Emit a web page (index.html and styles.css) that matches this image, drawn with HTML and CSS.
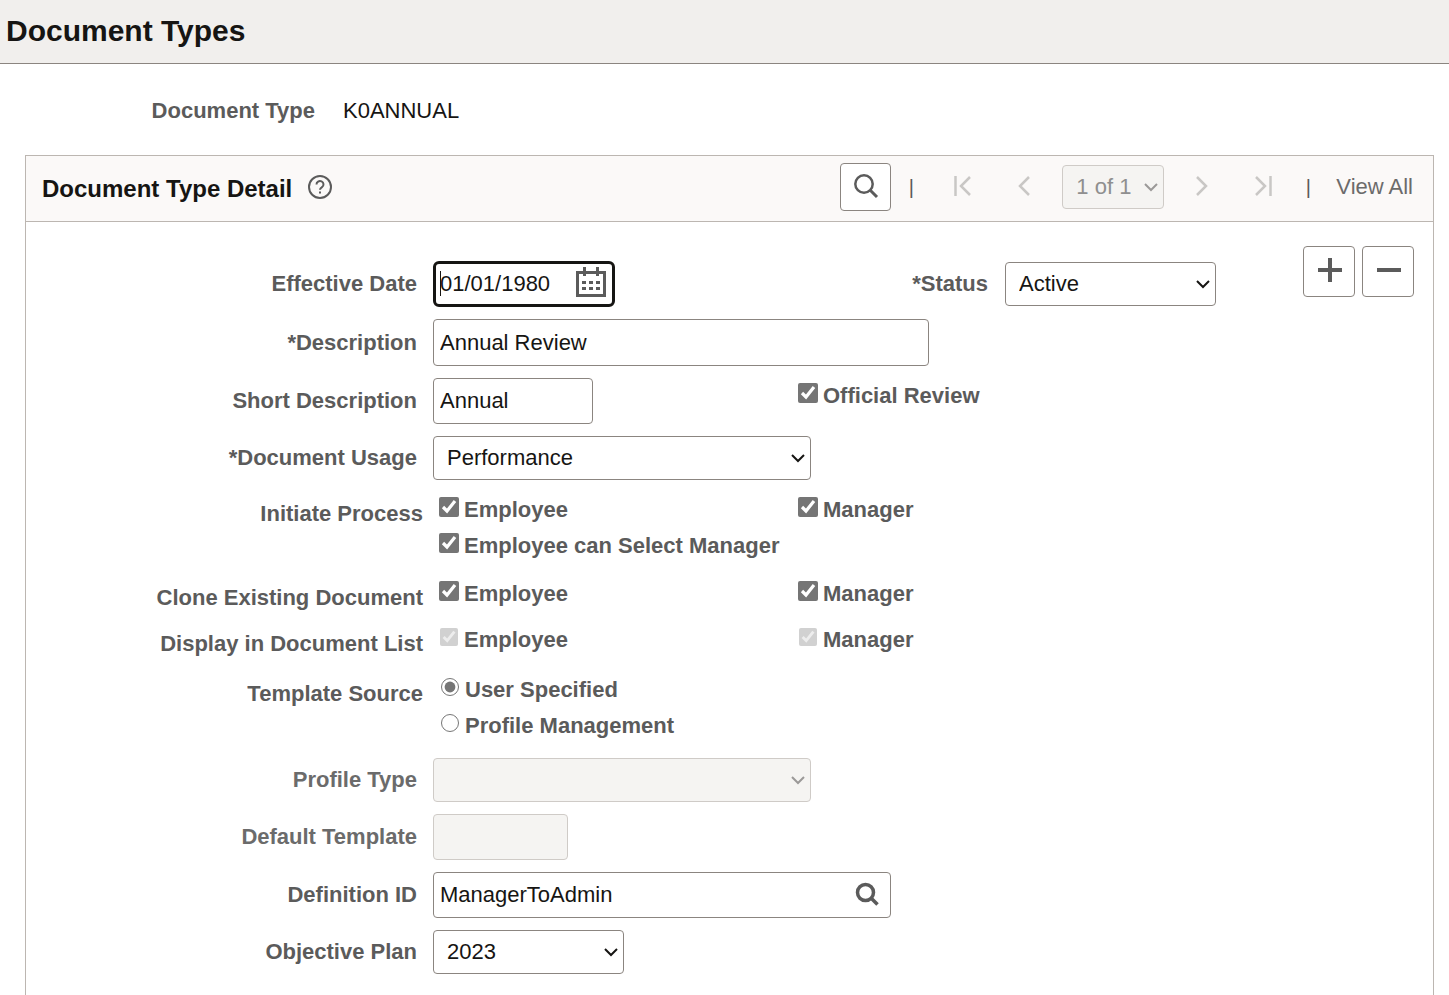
FILE: index.html
```html
<!DOCTYPE html>
<html lang="en">
<head>
    <meta charset="UTF-8">
    <meta name="viewport" content="width=device-width, initial-scale=1.0">
    <title>Document Types</title>
    <link rel="stylesheet" href="styles.css">
</head>
<body>

    <header class="page-header">
        <h1>Document Types</h1>
    </header>

    <div class="doc-key">
        <span class="doc-key-label">Document Type</span>
        <span class="doc-key-value">K0ANNUAL</span>
    </div>

    <section class="panel">
        <div class="panel-header">
            <h2>Document Type Detail</h2>
            <button type="button" class="icon-btn help" aria-label="Help">
                <svg width="26" height="26" viewBox="0 0 26 26"><circle cx="13" cy="13" r="11" stroke-width="2"/><path d="M9.500 10.500a3.500 3.300 0 1 1 5.500 2.600c-1.400.9-2 1.400-2 2.700" stroke-width="2"/><path d="M13 17.500v2" stroke-width="2"/></svg>
            </button>

            <nav class="pager">
                <button type="button" class="find-btn" aria-label="Find">
                    <svg width="26" height="26" viewBox="0 0 26 26"><circle cx="11" cy="11" r="8.700" stroke-width="2.500"/><path d="M17 17l7 7" stroke-width="3"/></svg>
                </button>
                <span class="bar bar-first">|</span>
                <button type="button" class="icon-btn nav-btn" aria-label="First row" disabled>
                    <svg width="18" height="20" viewBox="0 0 18 20"><path d="M1.500 0v20M16 1L7 10l9 9" stroke-width="2.500"/></svg>
                </button>
                <button type="button" class="icon-btn nav-btn" aria-label="Previous row" disabled>
                    <svg width="18" height="20" viewBox="0 0 18 20"><path d="M14 1L5 10l9 9" stroke-width="2.500"/></svg>
                </button>
                <span class="select-wrap disabled">
                    <select class="row-select" aria-label="Row" disabled>
                        <option>1 of 1</option>
                    </select>
                    <svg class="chevron" width="14" height="10" viewBox="0 0 14 10"><path d="M1 2l6 6 6-6" stroke-width="2"/></svg>
                </span>
                <button type="button" class="icon-btn nav-btn" aria-label="Next row" disabled>
                    <svg width="18" height="20" viewBox="0 0 18 20"><path d="M3 1l9 9-9 9" stroke-width="2.500"/></svg>
                </button>
                <button type="button" class="icon-btn nav-btn" aria-label="Last row" disabled>
                    <svg width="18" height="20" viewBox="0 0 18 20"><path d="M1 1l9 9-9 9M15.500 0v20" stroke-width="2.500"/></svg>
                </button>
                <span class="bar">|</span>
                <a href="#" class="view-all">View All</a>
            </nav>
        </div>

        <div class="panel-body">
            <form class="detail-form">
                <div class="row">
                    <label class="row-label" for="effdt">Effective Date</label>
                    <div class="col-main">
                        <span class="input-wrap date-wrap">
                            <input type="text" id="effdt" class="w-date focused" value="01/01/1980">
                            <button type="button" class="icon-btn in-field" aria-label="Choose a date">
                                <svg width="32" height="32" viewBox="0 0 32 32"><path d="M2.500 5.500h27v23h-27z" stroke-width="3"/><path d="M9.500 0v9M22.500 0v9" stroke-width="3"/><path d="M7 15.500h4M14 15.500h4M21 15.500h4M7 21.500h4M14 21.500h4M21 21.500h4" stroke-width="3"/></svg>
                            </button>
                        </span>
                    </div>
                    <label class="status-label" for="status">*Status</label>
                    <span class="select-wrap">
                        <select id="status" class="w-status">
                            <option>Active</option>
                            <option>Inactive</option>
                        </select>
                        <svg class="chevron" width="14" height="10" viewBox="0 0 14 10"><path d="M1 2l6 6 6-6" stroke-width="2"/></svg>
                    </span>
                </div>

                <div class="row">
                    <label class="row-label" for="descr">*Description</label>
                    <input type="text" id="descr" class="w-descr" value="Annual Review">
                </div>

                <div class="row">
                    <label class="row-label" for="descrshort">Short Description</label>
                    <div class="col-main">
                        <input type="text" id="descrshort" class="w-short" value="Annual">
                    </div>
                    <label class="choice choice-top"><input type="checkbox" checked><span>Official Review</span></label>
                </div>

                <div class="row">
                    <label class="row-label" for="usage">*Document Usage</label>
                    <span class="select-wrap">
                        <select id="usage" class="w-usage">
                            <option>Performance</option>
                            <option>Development</option>
                        </select>
                        <svg class="chevron" width="14" height="10" viewBox="0 0 14 10"><path d="M1 2l6 6 6-6" stroke-width="2"/></svg>
                    </span>
                </div>

                <div class="row choice-row" role="group" aria-labelledby="lbl-initiate">
                    <span class="row-label" id="lbl-initiate">Initiate Process</span>
                    <div class="choices">
                        <label class="choice"><input type="checkbox" checked><span>Employee</span></label>
                        <label class="choice"><input type="checkbox" checked><span>Manager</span></label>
                        <label class="choice"><input type="checkbox" checked><span>Employee can Select Manager</span></label>
                    </div>
                </div>

                <div class="row choice-row" role="group" aria-labelledby="lbl-clone">
                    <span class="row-label" id="lbl-clone">Clone Existing Document</span>
                    <div class="choices">
                        <label class="choice"><input type="checkbox" checked><span>Employee</span></label>
                        <label class="choice"><input type="checkbox" checked><span>Manager</span></label>
                    </div>
                </div>

                <div class="row choice-row tight" role="group" aria-labelledby="lbl-display">
                    <span class="row-label" id="lbl-display">Display in Document List</span>
                    <div class="choices">
                        <label class="choice"><input type="checkbox" checked disabled><span>Employee</span></label>
                        <label class="choice"><input type="checkbox" checked disabled><span>Manager</span></label>
                    </div>
                </div>

                <div class="row choice-row loose" role="radiogroup" aria-labelledby="lbl-source">
                    <span class="row-label" id="lbl-source">Template Source</span>
                    <div class="choices stacked">
                        <label class="choice"><input type="radio" name="source" checked><span>User Specified</span></label>
                        <label class="choice"><input type="radio" name="source"><span>Profile Management</span></label>
                    </div>
                </div>

                <div class="row loose">
                    <label class="row-label muted" for="profile">Profile Type</label>
                    <span class="select-wrap disabled">
                        <select id="profile" class="w-usage" disabled>
                            <option></option>
                        </select>
                        <svg class="chevron" width="14" height="10" viewBox="0 0 14 10"><path d="M1 2l6 6 6-6" stroke-width="2"/></svg>
                    </span>
                </div>

                <div class="row">
                    <label class="row-label muted" for="template">Default Template</label>
                    <input type="text" id="template" class="w-template" disabled>
                </div>

                <div class="row">
                    <label class="row-label" for="definition">Definition ID</label>
                    <span class="input-wrap">
                        <input type="text" id="definition" class="w-definition" value="ManagerToAdmin">
                        <button type="button" class="icon-btn in-field" aria-label="Look up Definition ID">
                            <svg width="24" height="24" viewBox="0 0 24 24"><circle cx="10.500" cy="10.500" r="8" stroke-width="3.500"/><path d="M16 16l6.500 6.500" stroke-width="3.500"/></svg>
                        </button>
                    </span>
                </div>

                <div class="row">
                    <label class="row-label" for="plan">Objective Plan</label>
                    <span class="select-wrap">
                        <select id="plan" class="w-plan">
                            <option>2023</option>
                        </select>
                        <svg class="chevron" width="14" height="10" viewBox="0 0 14 10"><path d="M1 2l6 6 6-6" stroke-width="2"/></svg>
                    </span>
                </div>
            </form>

            <div class="row-actions">
                <button type="button" class="action-btn" aria-label="Add a new row">
                    <svg width="26" height="24" viewBox="0 0 26 24"><path d="M2 12h24M14 0v24" stroke-width="4"/></svg>
                </button>
                <button type="button" class="action-btn" aria-label="Delete row">
                    <svg width="26" height="24" viewBox="0 0 26 24"><path d="M2 12h24" stroke-width="4"/></svg>
                </button>
            </div>
        </div>
    </section>

</body>
</html>
```

FILE: styles.css
```css
* { margin: 0; padding: 0; box-sizing: border-box; }
body { min-height: 100vh; display: flex; flex-direction: column; background: #fff; color: #161513; font-family: "Liberation Sans", Arial, sans-serif; font-size: 22px; line-height: 26px; }
button, input, select { font: inherit; color: inherit; }
svg { display: block; fill: none; stroke: #5b5b5b; }

.page-header { padding: 11px 6px 12px; background: #f1efed; border-bottom: 1px solid #8b8580; }
h1 { font-size: 30px; line-height: 40px; }

.doc-key { display: flex; gap: 28px; padding: 34px 0 31px; }
.doc-key-label { width: 315px; text-align: right; font-weight: bold; color: #5b5b5b; }

/* panel */
.panel { flex: 1; margin: 0 15px 0 25px; border: 1px solid #bcb6b1; border-bottom: none; }
.panel-header { display: flex; align-items: center; height: 66px; padding: 0 20px 0 16px; background: #fbf9f8; border-bottom: 1px solid #bcb6b1; }
h2 { font-size: 24px; line-height: 28px; }
.icon-btn { display: flex; align-items: center; justify-content: center; background: none; border: none; cursor: pointer; }
.help { margin: 0 0 3px 15px; }

/* pager */
.pager { display: flex; align-items: center; gap: 16px; margin-left: auto; padding-bottom: 3px; }
.find-btn { display: flex; align-items: center; justify-content: center; width: 51px; height: 48px; padding-bottom: 2px; background: #fff; border: 1px solid #8b8580; border-radius: 4px; cursor: pointer; }
.bar { width: 12px; text-align: center; font-size: 20px; color: #5b5b5b; }
.bar-first { margin: 0 7px 0 -2px; }
.nav-btn { width: 45px; height: 44px; padding-bottom: 3px; }
.nav-btn svg { stroke: #c9c7c5; }
.view-all { padding-left: 6px; color: #6b6b6b; text-decoration: none; }

/* fields */
.panel-body { display: flex; justify-content: space-between; padding: 24px 19px 21px 0; }
.detail-form { display: flex; flex-direction: column; gap: 12px; padding-top: 15px; }
.row { display: flex; align-items: center; }
.row-label { width: 391px; margin-right: 16px; text-align: right; font-weight: bold; color: #5b5b5b; }
.row-label.muted { color: #6b6b6b; }
.col-main { width: 365px; }
.status-label { width: 190px; margin-right: 17px; text-align: right; font-weight: bold; color: #5b5b5b; }

input[type="text"] { display: block; height: 46px; padding: 0 6px; background: #fff; border: 1px solid #8b8580; border-radius: 4px; outline: none; }
select { display: block; height: 44px; padding: 0 32px 0 13px; background: #fff; border: 1px solid #8b8580; border-radius: 4px; appearance: none; }
input[type="text"].focused { border: 3px solid #161513; border-radius: 6px; padding: 0 4px; }
input[type="text"]:disabled, select:disabled { background: #f5f4f2; border-color: #cfcbc7; color: #8f8f8f; opacity: 1; }

.input-wrap, .select-wrap { position: relative; display: block; }
.date-wrap { width: 182px; }
/* text cursor in the active date field */
.date-wrap::before { content: ""; position: absolute; top: 10px; left: 7px; width: 1px; height: 25px; background: #161513; }
.in-field { position: absolute; top: 0; right: 12px; height: 44px; }
.date-wrap .in-field { right: 8px; }
.chevron { position: absolute; right: 6px; top: 17px; pointer-events: none; stroke: #161513; }
.disabled .chevron { stroke: #9b9998; }

.w-date { width: 182px; }
input[type="text"].w-descr { width: 496px; height: 47px; }
.w-short { width: 160px; }
.w-usage { width: 378px; }
.w-status { width: 211px; }
.w-template { width: 135px; }
.w-definition { width: 458px; }
.w-plan { width: 191px; }
.row-select { width: 102px; }

/* check boxes and radios */
.choice-row { align-items: flex-start; }
.choice-row .row-label { width: 397px; padding-top: 9px; }
.tight { margin-top: -2px; }
.loose { margin-top: 2px; }
.choices { display: grid; grid-template-columns: 359px auto; }
.choices.stacked { grid-template-columns: auto; }
.choice { display: flex; align-items: center; height: 36px; font-weight: bold; color: #5b5b5b; }
.choice input { width: 20px; height: 20px; margin: 0 5px 6px 0; accent-color: #757575; }
.choice input:disabled { width: 18px; height: 18px; margin: 0 6px 6px 1px; }
.choice input[type="radio"] { width: 18px; height: 18px; margin: 0 6px 6px 2px; }
.choice-top { align-self: flex-start; }

.row-actions { display: flex; gap: 7px; }
.action-btn { display: flex; align-items: center; justify-content: center; width: 52px; height: 51px; padding-bottom: 3px; background: #fff; border: 1px solid #8b8580; border-radius: 4px; cursor: pointer; }
```
